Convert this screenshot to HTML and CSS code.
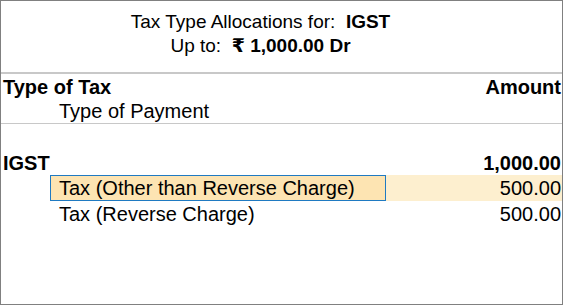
FILE: index.html
```html
<!DOCTYPE html>
<html>
<head>
<meta charset="utf-8">
<link rel="stylesheet" href="styles.css">
</head>
<body>
<div class="frame">
  <div class="header">
    <div class="title">Tax Type Allocations for:&nbsp; <b>IGST</b></div>
    <div class="title">Up to:&nbsp; <b>₹ 1,000.00 Dr</b></div>
  </div>
  <div class="colhead">
    <div class="row">
      <div class="cell-label bold">Type of Tax</div>
      <div class="cell-amt bold">Amount</div>
    </div>
    <div class="row sub">
      <div class="cell-label sublabel">Type of Payment</div>
    </div>
  </div>
  <div class="body">
    <div class="row group">
      <div class="cell-label bold">IGST</div>
      <div class="cell-amt bold">1,000.00</div>
    </div>
    <div class="row item selected">
      <div class="item-label">Tax (Other than Reverse Charge)</div>
      <div class="cell-amt">500.00</div>
    </div>
    <div class="row item">
      <div class="item-label">Tax (Reverse Charge)</div>
      <div class="cell-amt">500.00</div>
    </div>
  </div>
</div>
</body>
</html>
```
FILE: styles.css
```css
* { box-sizing: border-box; }
html, body { margin: 0; padding: 0; background: #fff; }
body {
  font-family: "Liberation Sans", Arial, "DejaVu Sans", sans-serif;
  font-size: 20px;
  color: #000;
}
.frame {
  width: 563px;
  height: 305px;
  border: 1px solid #808080;
  background: #fff;
}
.header {
  padding: 9px 42px 14px 0;
  text-align: center;
  line-height: 24px;
  font-size: 19px;
  border-bottom: 2px solid #c8c8c8;
}
.title b { font-weight: bold; }
.colhead {
  padding-top: 1px;
  border-bottom: 1px solid #c8c8c8;
}
.row {
  display: flex;
  line-height: 24px;
  height: 24px;
}
.bold { font-weight: bold; }
.cell-label { padding-left: 2px; flex: 1; }
.sublabel { padding-left: 58px; }
.cell-amt {
  flex: 1;
  text-align: right;
  padding-right: 1px;
}
.body { padding-top: 27px; }
.row.item {
  margin-left: 49px;
  height: 26px;
}
.item-label {
  width: 336px;
  padding-left: 8px;
  border: 1px solid transparent;
}
.row.item .cell-amt { padding-top: 1px; }
.selected { background: #fdefcf; }
.selected .item-label {
  background: #fde4b2;
  border-color: #1f7ac2;
}
```
